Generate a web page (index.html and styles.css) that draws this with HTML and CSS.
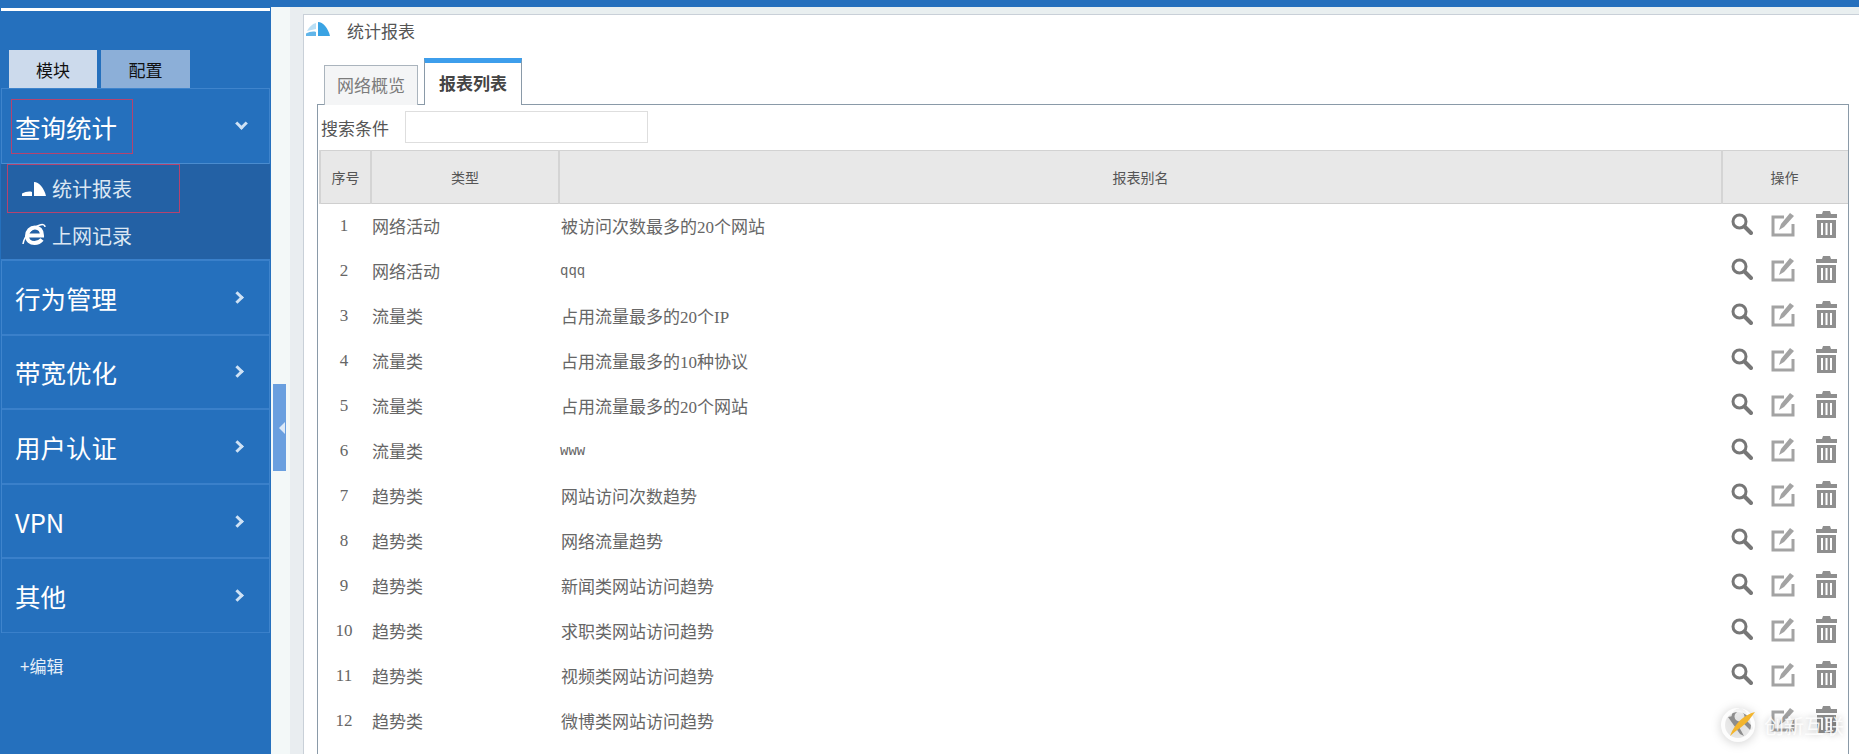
FILE: index.html
```html
<!DOCTYPE html>
<html lang="zh-CN">
<head>
  <meta charset="UTF-8">
  <title>统计报表</title>
  <link rel="stylesheet" href="styles.css">
</head>
<body>
  <svg class="defs" width="0" height="0">
    <symbol id="i-gauge" viewBox="0 0 26 16">
      <path d="M13 1 C18 1 23 7 25 15 L13 15 Z"/>
      <path d="M1 15 L1 12.500 C4 11 8 10 11 11 L11 15 Z"/>
    </symbol>
    <symbol id="i-gauge-arc" viewBox="0 0 26 16">
      <path d="M13 1 C18 1 23 7 25 15 L13 15 Z"/>
      <path d="M1 15 L1 12.500 C4 11 8 10 11 11 L11 15 Z" opacity=".8"/>
      <path d="M11 2 C7 3 4 6 2 10 L11 8 Z" opacity=".35"/>
    </symbol>
    <symbol id="i-ie" viewBox="0 0 24 24">
      <path d="M6 12.500 H20 C20 7 17 4.500 13 4.500 C8.500 4.500 5 8 5 13 C5 17.500 8.500 20 12.500 20 C15.500 20 18 19 20 16.500" fill="none" stroke="#fff" stroke-width="4"/>
      <path d="M1 21 C2 14 9 5 18 2 C21 1 23 2 23 4" fill="none" stroke="#fff" stroke-width="1.500"/>
    </symbol>
    <symbol id="i-search" viewBox="0 0 22 22">
      <circle cx="8.500" cy="8.500" r="6.500" fill="none" stroke="currentColor" stroke-width="3"/>
      <path d="M13.500 13.500 L20 20" fill="none" stroke="currentColor" stroke-width="4" stroke-linecap="round"/>
    </symbol>
    <symbol id="i-edit" viewBox="0 0 24 25">
      <path d="M13 5 H2 V23 H22 V12" fill="none" stroke="currentColor" stroke-width="3"/>
      <path d="M19 1 L23 4 L13 15 L8 18 L10 12 Z" fill="currentColor"/>
    </symbol>
    <symbol id="i-trash" viewBox="0 0 23 27">
      <path d="M8 0 H15 L16 3 H22 V7 H1 V3 H7 Z" fill="currentColor"/>
      <path d="M2 9 H21 V27 H2 Z M6 12 V24 H8 V12 Z M10.500 12 V24 H12.500 V12 Z M15 12 V24 H17 V12 Z" fill="currentColor" fill-rule="evenodd"/>
    </symbol>
  </svg>

  <div class="page">
    <aside class="sidebar">
      <div class="sidebar-line"></div>
      <div class="module-tabs">
        <div class="module-tab module-tab-on">模块</div>
        <div class="module-tab module-tab-off">配置</div>
      </div>
      <nav class="menu">
        <div class="menu-item menu-open">
          <span class="mark mark-head">查询统计</span>
          <span class="chevron chevron-down"></span>
        </div>
        <div class="submenu">
          <div class="sub-item sub-marked">
            <svg class="sub-icon"><use href="#i-gauge"/></svg>
            <span>统计报表</span>
          </div>
          <div class="sub-item sub-plain">
            <svg class="sub-icon"><use href="#i-ie"/></svg>
            <span>上网记录</span>
          </div>
        </div>
        <div class="menu-item"><span>行为管理</span><span class="chevron"></span></div>
        <div class="menu-item"><span>带宽优化</span><span class="chevron"></span></div>
        <div class="menu-item"><span>用户认证</span><span class="chevron"></span></div>
        <div class="menu-item"><span>VPN</span><span class="chevron"></span></div>
        <div class="menu-item"><span>其他</span><span class="chevron"></span></div>
      </nav>
      <div class="edit-link">+编辑</div>
    </aside>

    <main class="main">
      <div class="top-strip"></div>
      <div class="main-body">
        <div class="gutter"><div class="collapse"><span class="collapse-arrow"></span></div></div>
        <div class="rail"></div>
        <section class="panel">
          <div class="panel-head">
            <svg class="panel-icon"><use href="#i-gauge-arc"/></svg>
            <span>统计报表</span>
          </div>
          <div class="tabs">
            <div class="tab">网络概览</div>
            <div class="tab tab-active">报表列表</div>
          </div>
          <div class="box">
            <div class="search">
              <label for="s-cond">搜索条件</label>
              <input type="text" id="s-cond">
            </div>
            <table class="report">
              <colgroup>
                <col class="col-no"><col class="col-type"><col><col class="col-op">
              </colgroup>
              <thead>
                <tr><th>序号</th><th>类型</th><th>报表别名</th><th>操作</th></tr>
              </thead>
              <tbody>
                <tr><td class="no">1</td><td>网络活动</td><td class="name">被访问次数最多的20个网站</td><td class="ops"><svg class="op op-s"><use href="#i-search"/></svg><svg class="op op-e"><use href="#i-edit"/></svg><svg class="op op-t"><use href="#i-trash"/></svg></td></tr>
                <tr><td class="no">2</td><td>网络活动</td><td class="latin">qqq</td><td class="ops"><svg class="op op-s"><use href="#i-search"/></svg><svg class="op op-e"><use href="#i-edit"/></svg><svg class="op op-t"><use href="#i-trash"/></svg></td></tr>
                <tr><td class="no">3</td><td>流量类</td><td class="name">占用流量最多的20个IP</td><td class="ops"><svg class="op op-s"><use href="#i-search"/></svg><svg class="op op-e"><use href="#i-edit"/></svg><svg class="op op-t"><use href="#i-trash"/></svg></td></tr>
                <tr><td class="no">4</td><td>流量类</td><td class="name">占用流量最多的10种协议</td><td class="ops"><svg class="op op-s"><use href="#i-search"/></svg><svg class="op op-e"><use href="#i-edit"/></svg><svg class="op op-t"><use href="#i-trash"/></svg></td></tr>
                <tr><td class="no">5</td><td>流量类</td><td class="name">占用流量最多的20个网站</td><td class="ops"><svg class="op op-s"><use href="#i-search"/></svg><svg class="op op-e"><use href="#i-edit"/></svg><svg class="op op-t"><use href="#i-trash"/></svg></td></tr>
                <tr><td class="no">6</td><td>流量类</td><td class="latin">www</td><td class="ops"><svg class="op op-s"><use href="#i-search"/></svg><svg class="op op-e"><use href="#i-edit"/></svg><svg class="op op-t"><use href="#i-trash"/></svg></td></tr>
                <tr><td class="no">7</td><td>趋势类</td><td class="name">网站访问次数趋势</td><td class="ops"><svg class="op op-s"><use href="#i-search"/></svg><svg class="op op-e"><use href="#i-edit"/></svg><svg class="op op-t"><use href="#i-trash"/></svg></td></tr>
                <tr><td class="no">8</td><td>趋势类</td><td class="name">网络流量趋势</td><td class="ops"><svg class="op op-s"><use href="#i-search"/></svg><svg class="op op-e"><use href="#i-edit"/></svg><svg class="op op-t"><use href="#i-trash"/></svg></td></tr>
                <tr><td class="no">9</td><td>趋势类</td><td class="name">新闻类网站访问趋势</td><td class="ops"><svg class="op op-s"><use href="#i-search"/></svg><svg class="op op-e"><use href="#i-edit"/></svg><svg class="op op-t"><use href="#i-trash"/></svg></td></tr>
                <tr><td class="no">10</td><td>趋势类</td><td class="name">求职类网站访问趋势</td><td class="ops"><svg class="op op-s"><use href="#i-search"/></svg><svg class="op op-e"><use href="#i-edit"/></svg><svg class="op op-t"><use href="#i-trash"/></svg></td></tr>
                <tr><td class="no">11</td><td>趋势类</td><td class="name">视频类网站访问趋势</td><td class="ops"><svg class="op op-s"><use href="#i-search"/></svg><svg class="op op-e"><use href="#i-edit"/></svg><svg class="op op-t"><use href="#i-trash"/></svg></td></tr>
                <tr><td class="no">12</td><td>趋势类</td><td class="name">微博类网站访问趋势</td><td class="ops"><svg class="op op-s"><use href="#i-search"/></svg><svg class="op op-e"><use href="#i-edit"/></svg><svg class="op op-t"><use href="#i-trash"/></svg></td></tr>
              </tbody>
            </table>
          </div>
        </section>
      </div>
    </main>
  </div>

  <!-- watermark sits over the last row -->
  <div class="watermark">
    <svg class="wm-logo" viewBox="0 0 36 36">
      <circle cx="18" cy="18" r="15" fill="#fff" fill-opacity=".25" stroke="#fff" stroke-opacity=".9" stroke-width="4"/>
      <path d="M8 10 L20 27 L24 29 L13 9 Z" fill="#8d8d8d"/>
      <path d="M35 5 C24 8 15 16 10 29 C18 22 26 17 29 13 Z" fill="#f3b52d"/>
    </svg>
    <span>创新互联</span>
  </div>
</body>
</html>
```

FILE: styles.css
```css
html, body {
  margin: 0;
  padding: 0;
  height: 754px;
  overflow: hidden;
}
body {
  position: relative;
  font-family: "Liberation Serif", "Noto Sans CJK SC", serif;
  font-size: 17px;
  color: #666;
  background: #fff;
}
.defs {
  position: absolute;
}
.page {
  display: flex;
  height: 754px;
}

/* sidebar */
.sidebar {
  width: 271px;
  flex-shrink: 0;
  background: #2570bd;
  font-family: "Noto Sans CJK SC", sans-serif;
  color: #fff;
}
.sidebar-line {
  height: 3px;
  margin: 8px 1px 0;
  background: #fff;
}
.module-tabs {
  display: flex;
  gap: 4px;
  margin: 39px 0 0 9px;
}
.module-tab {
  width: 88px;
  height: 38px;
  line-height: 40px;
  text-align: center;
  font-size: 17px;
  color: #111;
}
.module-tab-on {
  background: #ccdaec;
}
.module-tab-off {
  width: 89px;
  background: #8cafd8;
}
.menu {
  margin: 0 1px;
  border: 1px solid #3f84cc;
  border-width: 1px 1px 0;
}
.menu-item {
  display: flex;
  align-items: center;
  justify-content: space-between;
  height: 72.600px;
  padding: 0 27px 0 13px;
  border-bottom: 2px solid #3a80ca;
  font-size: 25.500px;
}
.menu-open {
  height: 74px;
  padding-right: 23px;
  border-bottom-width: 1px;
  border-bottom-color: #4a8ccf;
}
.menu-item:last-child {
  border-bottom-width: 1px;
}
.mark-head {
  outline: 1px solid #b5436f;
  padding: 8px 15px 8px 3px;
  margin-left: -3px;
}
.chevron {
  width: 6px;
  height: 6px;
  border: solid #cfe2f5;
  border-width: 3px 3px 0 0;
  transform: rotate(45deg);
}
.chevron-down {
  transform: rotate(135deg);
  margin-bottom: 6px;
}
.submenu {
  margin: 0 -1px;
  background: #2361a5;
  border-bottom: 2px solid #3a80ca;
}
.sub-item {
  display: flex;
  align-items: center;
  gap: 5px;
  font-size: 20px;
  color: #dbe7f3;
}
.sub-marked {
  width: 159px;
  height: 49px;
  margin-left: 6px;
  padding-left: 14px;
  outline: 1px solid #b5436f;
  outline-offset: -1px;
}
.sub-plain {
  height: 44px;
  padding: 0 0 2px 20px;
}
.sub-icon {
  width: 26px;
  height: 24px;
  fill: #fff;
}
.edit-link {
  margin: 20px 0 0 20px;
  font-size: 17px;
  color: #e6eff8;
}

/* main area */
.main {
  flex: 1;
  display: flex;
  flex-direction: column;
  min-width: 0;
}
.top-strip {
  height: 7px;
  background: #2570bd;
}
.main-body {
  flex: 1;
  display: flex;
  min-height: 0;
}
.gutter {
  width: 19px;
  padding: 377px 0 0 2px;
  box-sizing: border-box;
  background: #f3f8f8;
}
.collapse {
  display: flex;
  align-items: center;
  justify-content: flex-end;
  width: 13px;
  height: 87px;
  padding-right: 1px;
  box-sizing: border-box;
  background: #6a9fdf;
}
.collapse-arrow {
  border: 6px solid transparent;
  border-left-width: 0;
  border-right: 6px solid #dce9f8;
}
.rail {
  width: 13px;
  background: #e9edf0;
}
.panel {
  flex: 1;
  min-width: 0;
  margin-top: 7px;
  padding: 0 10px 0 13px;
  border: 1px solid #c9d0d8;
  border-width: 1px 0 0 1px;
  background: #fff;
  box-shadow: 0 -7px 0 #e9eff0;
}
.panel-head {
  display: flex;
  align-items: center;
  gap: 16px;
  height: 30px;
  margin-left: -12px;
  font-family: "Noto Sans CJK SC", sans-serif;
  color: #555;
}
.panel-icon {
  width: 26px;
  height: 16px;
  margin-bottom: 3px;
  fill: #3aa3e3;
}

/* tabs */
.tabs {
  display: flex;
  align-items: flex-end;
  gap: 6px;
  height: 47px;
  margin: 13px 0 -1px 7px;
  position: relative;
}
.tab {
  box-sizing: border-box;
  width: 94px;
  height: 40px;
  line-height: 41px;
  text-align: center;
  border: 1px solid #aab4bd;
  border-bottom: 0;
  background: #f4f5f6;
  color: #7c7c7c;
}
.tab-active {
  width: 98px;
  height: 47px;
  line-height: 44px;
  border-top: 5px solid #3d9eec;
  border-color: #3d9eec #8a9aa8 #fff;
  background: #fff;
  color: #444;
  font-weight: 700;
}

/* list box */
.box {
  border: 1px solid #8a9aa8;
  border-width: 1px 1px 0;
  height: 650px;
}
.search {
  display: flex;
  align-items: center;
  gap: 18px;
  height: 45px;
  padding-left: 3px;
  box-sizing: border-box;
  color: #555;
}
.search label {
  width: 66px;
  white-space: nowrap;
}
.search input {
  width: 243px;
  height: 32px;
  box-sizing: border-box;
  margin: 0 0 2px;
  padding: 0 4px;
  border: 1px solid #dedede;
  background: #fff;
}

/* table */
.report {
  width: 1529px;
  margin-left: 1px;
  border-collapse: collapse;
  table-layout: fixed;
}
.col-no { width: 51px; }
.col-type { width: 188px; }
.col-op { width: 126px; }
.report th {
  height: 53px;
  padding: 0;
  box-sizing: border-box;
  background: #e8e8e8;
  border-top: 1px solid #d2d2d2;
  border-bottom: 1px solid #cfcfcf;
  border-left: 2px solid #d4d4d4;
  font-size: 14px;
  font-weight: 400;
  color: #555;
}
.report th:last-child {
  padding-right: 2px;
}
.report td {
  height: 45px;
  padding: 0 0 1px 1px;
  box-sizing: border-box;
  white-space: nowrap;
}
.report td.no {
  padding: 0 3px 0 0;
  text-align: center;
}
.report td.name {
  padding-left: 2px;
}
.report td.latin {
  font: 14px "Liberation Mono", monospace;
  padding-left: 1px;
}
.report td.ops {
  padding-left: 9px;
}
.op {
  display: inline-block;
  vertical-align: middle;
  color: #8f8f8f;
}
.op-s {
  width: 22px;
  height: 22px;
  margin: 0 18px 4px 0;
  color: #777;
}
.op-e {
  width: 24px;
  height: 25px;
  margin: 0 20px 3px 0;
  color: #a3a3a3;
}
.op-t {
  width: 23px;
  height: 27px;
  margin-bottom: 3px;
}

/* watermark */
.watermark {
  position: absolute;
  left: 1720px;
  top: 704px;
  display: flex;
  align-items: center;
  gap: 8px;
  height: 42px;
  font-family: "Noto Sans CJK SC", sans-serif;
  font-size: 20px;
  color: rgba(255, 255, 255, .85);
  text-shadow: 0 0 6px rgba(0, 0, 0, .25);
}
.wm-logo {
  width: 36px;
  height: 36px;
  filter: drop-shadow(0 1px 5px rgba(0, 0, 0, .25));
}
```
